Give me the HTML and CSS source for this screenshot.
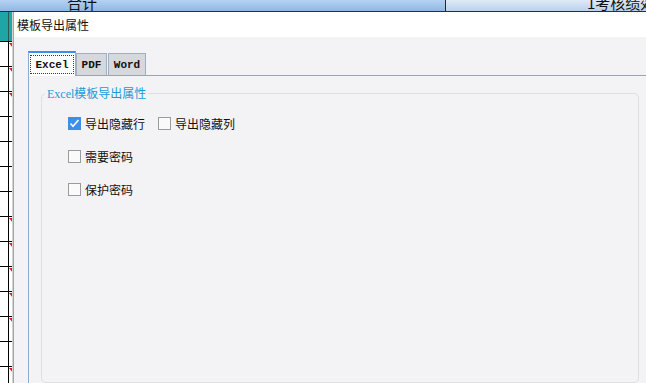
FILE: index.html
```html
<!DOCTYPE html>
<html lang="zh-CN">
<head>
  <meta charset="UTF-8" />
  <title>模板导出属性</title>
  <link rel="stylesheet" href="styles.css">
</head>
<body>
  <!-- spreadsheet behind the dialog -->
  <div class="sheet">
    <div class="sheet-head">
      <div class="hcell hcell-a"><span>合计</span></div>
      <div class="hcell hcell-b"><span>1考核绩效</span></div>
    </div>
    <div class="sheet-side">
      <div class="side-top"></div>
      <div class="row"><div class="c1"></div><div class="c2"><i class="note"></i></div></div>
      <div class="row"><div class="c1"></div><div class="c2"><i class="note"></i></div></div>
      <div class="row"><div class="c1"></div><div class="c2"><i class="note"></i></div></div>
      <div class="row"><div class="c1"></div><div class="c2"></div></div>
      <div class="row"><div class="c1"></div><div class="c2"></div></div>
      <div class="row"><div class="c1"></div><div class="c2"></div></div>
      <div class="row"><div class="c1"></div><div class="c2"></div></div>
      <div class="row"><div class="c1"></div><div class="c2"><i class="note"></i></div></div>
      <div class="row"><div class="c1"></div><div class="c2"><i class="note"></i></div></div>
      <div class="row"><div class="c1"></div><div class="c2"><i class="note"></i></div></div>
      <div class="row"><div class="c1"></div><div class="c2"><i class="note"></i></div></div>
      <div class="row"><div class="c1"></div><div class="c2"><i class="note"></i></div></div>
      <div class="row"><div class="c1"></div><div class="c2"></div></div>
      <div class="row"><div class="c1"></div><div class="c2"><i class="note"></i></div></div>
    </div>
  </div>

  <div class="dialog">
    <div class="dlg-title">模板导出属性</div>
    <div class="dlg-body">
      <div class="tabs">
        <div class="tab active"><span>Excel</span></div>
        <div class="tab tab-pdf">PDF</div>
        <div class="tab tab-word">Word</div>
      </div>
      <div class="panel">
        <fieldset>
          <legend><span class="latin">Excel</span>模板导出属性</legend>
          <div class="opts">
            <div class="opt-row">
              <label class="opt">
                <span class="box checked">
                  <svg width="11" height="11" viewBox="0 0 11 11"><polyline points="1.5,5.5 4,8.2 9.5,2" fill="none" stroke="#fff" stroke-width="1.6"/></svg>
                </span>
                导出隐藏行
              </label>
              <label class="opt"><span class="box"></span>导出隐藏列</label>
            </div>
            <div class="opt-row">
              <label class="opt"><span class="box"></span>需要密码</label>
            </div>
            <div class="opt-row">
              <label class="opt"><span class="box"></span>保护密码</label>
            </div>
          </div>
        </fieldset>
      </div>
    </div>
  </div>
</body>
</html>
```

FILE: styles.css
```css
* { box-sizing: border-box; }
body { margin: 0; width: 646px; height: 383px; overflow: hidden; position: relative; background: #fff; font-family: "Noto Sans CJK SC", sans-serif; font-size: 12px; color: #111; }

/* sheet */
.sheet-head { display: flex; height: 12px; border-bottom: 1px solid #243040; }
.hcell { height: 11px; overflow: hidden; font-size: 15px; line-height: 15px; color: #111; }
.hcell span { display: block; margin-top: -5px; white-space: nowrap; }
.hcell-a { width: 446px; padding-left: 67px; border-right: 1px solid #1c2836; background: linear-gradient(#b6d2f2, #8fb7e6); }
.hcell-b { flex: 1; padding-left: 141px; background: linear-gradient(#dfeaf7, #bad1ee); }
.sheet-side { width: 13px; }
.side-top { height: 29px; background: linear-gradient(to right, #1fa5a5 8px, #2b5656 8px, #2b5656 9px, #1fa5a5 9px); }
.row { display: flex; height: 25px; border-top: 1px solid #000; }
.row .c1 { width: 8px; }
.row .c2 { width: 5px; border-left: 1px solid #000; display: flex; justify-content: flex-end; align-items: flex-start; }
.note { display: block; margin-top: 1px; width: 0; height: 0; border-top: 5px solid #e8102a; border-left: 4px solid transparent; }

/* dialog */
.dialog { position: absolute; left: 13px; top: 12px; width: 633px; height: 371px; border-left: 1px solid #a4a4a4; box-shadow: -1px 0 0 #d4d4d4; background: #f3f3f5; display: flex; flex-direction: column; }
.dlg-title { height: 25px; padding: 4px 0 0 3px; line-height: 17px; background: #fff; }
.dlg-body { flex: 1; display: flex; flex-direction: column; padding: 14px 0 0 14px; }

.tabs { display: flex; align-items: flex-end; height: 24px; }
.tab { height: 22px; display: flex; align-items: center; justify-content: center; border: 1px solid #a2adbf; border-bottom: 0; background: #d7d8dc; font: bold 11px "Liberation Mono", monospace; color: #111; }
.tab-pdf { width: 31px; }
.tab-word { width: 38px; margin-left: 1px; }
.tab.active { position: relative; z-index: 1; width: 48px; height: 25px; margin-bottom: -1px; align-items: flex-start; background: #fff; border-top: 2px solid #3c8fe6; border-left-color: #8eaad0; }
.tab.active span { display: flex; align-items: center; justify-content: center; width: 44px; height: 19px; margin-top: 2px; border: 1px dotted #3a3a3a; }

.panel { flex: 1; display: flex; flex-direction: column; padding: 9px 7px 0 12px; border-top: 1px solid #9aa3b5; border-left: 1px solid #8eaad0; }
fieldset { flex: 1; margin: 0; padding: 0; min-width: 0; border: 1px solid #dedee3; border-radius: 5px; }
legend { margin-left: 3px; padding: 0 2px; line-height: 16px; font-size: 12px; color: #1a9bd7; }
legend .latin { font-family: "Liberation Serif", serif; }

.opts { display: flex; flex-direction: column; gap: 20px; padding: 15px 0 0 26px; }
.opt-row { display: flex; gap: 13px; height: 13px; }
.opt { display: flex; align-items: center; gap: 4px; line-height: 13px; white-space: nowrap; }
.box { display: flex; align-items: center; justify-content: center; width: 13px; height: 13px; border: 1px solid #9b9b9b; background: #fafafa; }
.box.checked { background: #3b8fe8; border-color: #3b8fe8; }
```
